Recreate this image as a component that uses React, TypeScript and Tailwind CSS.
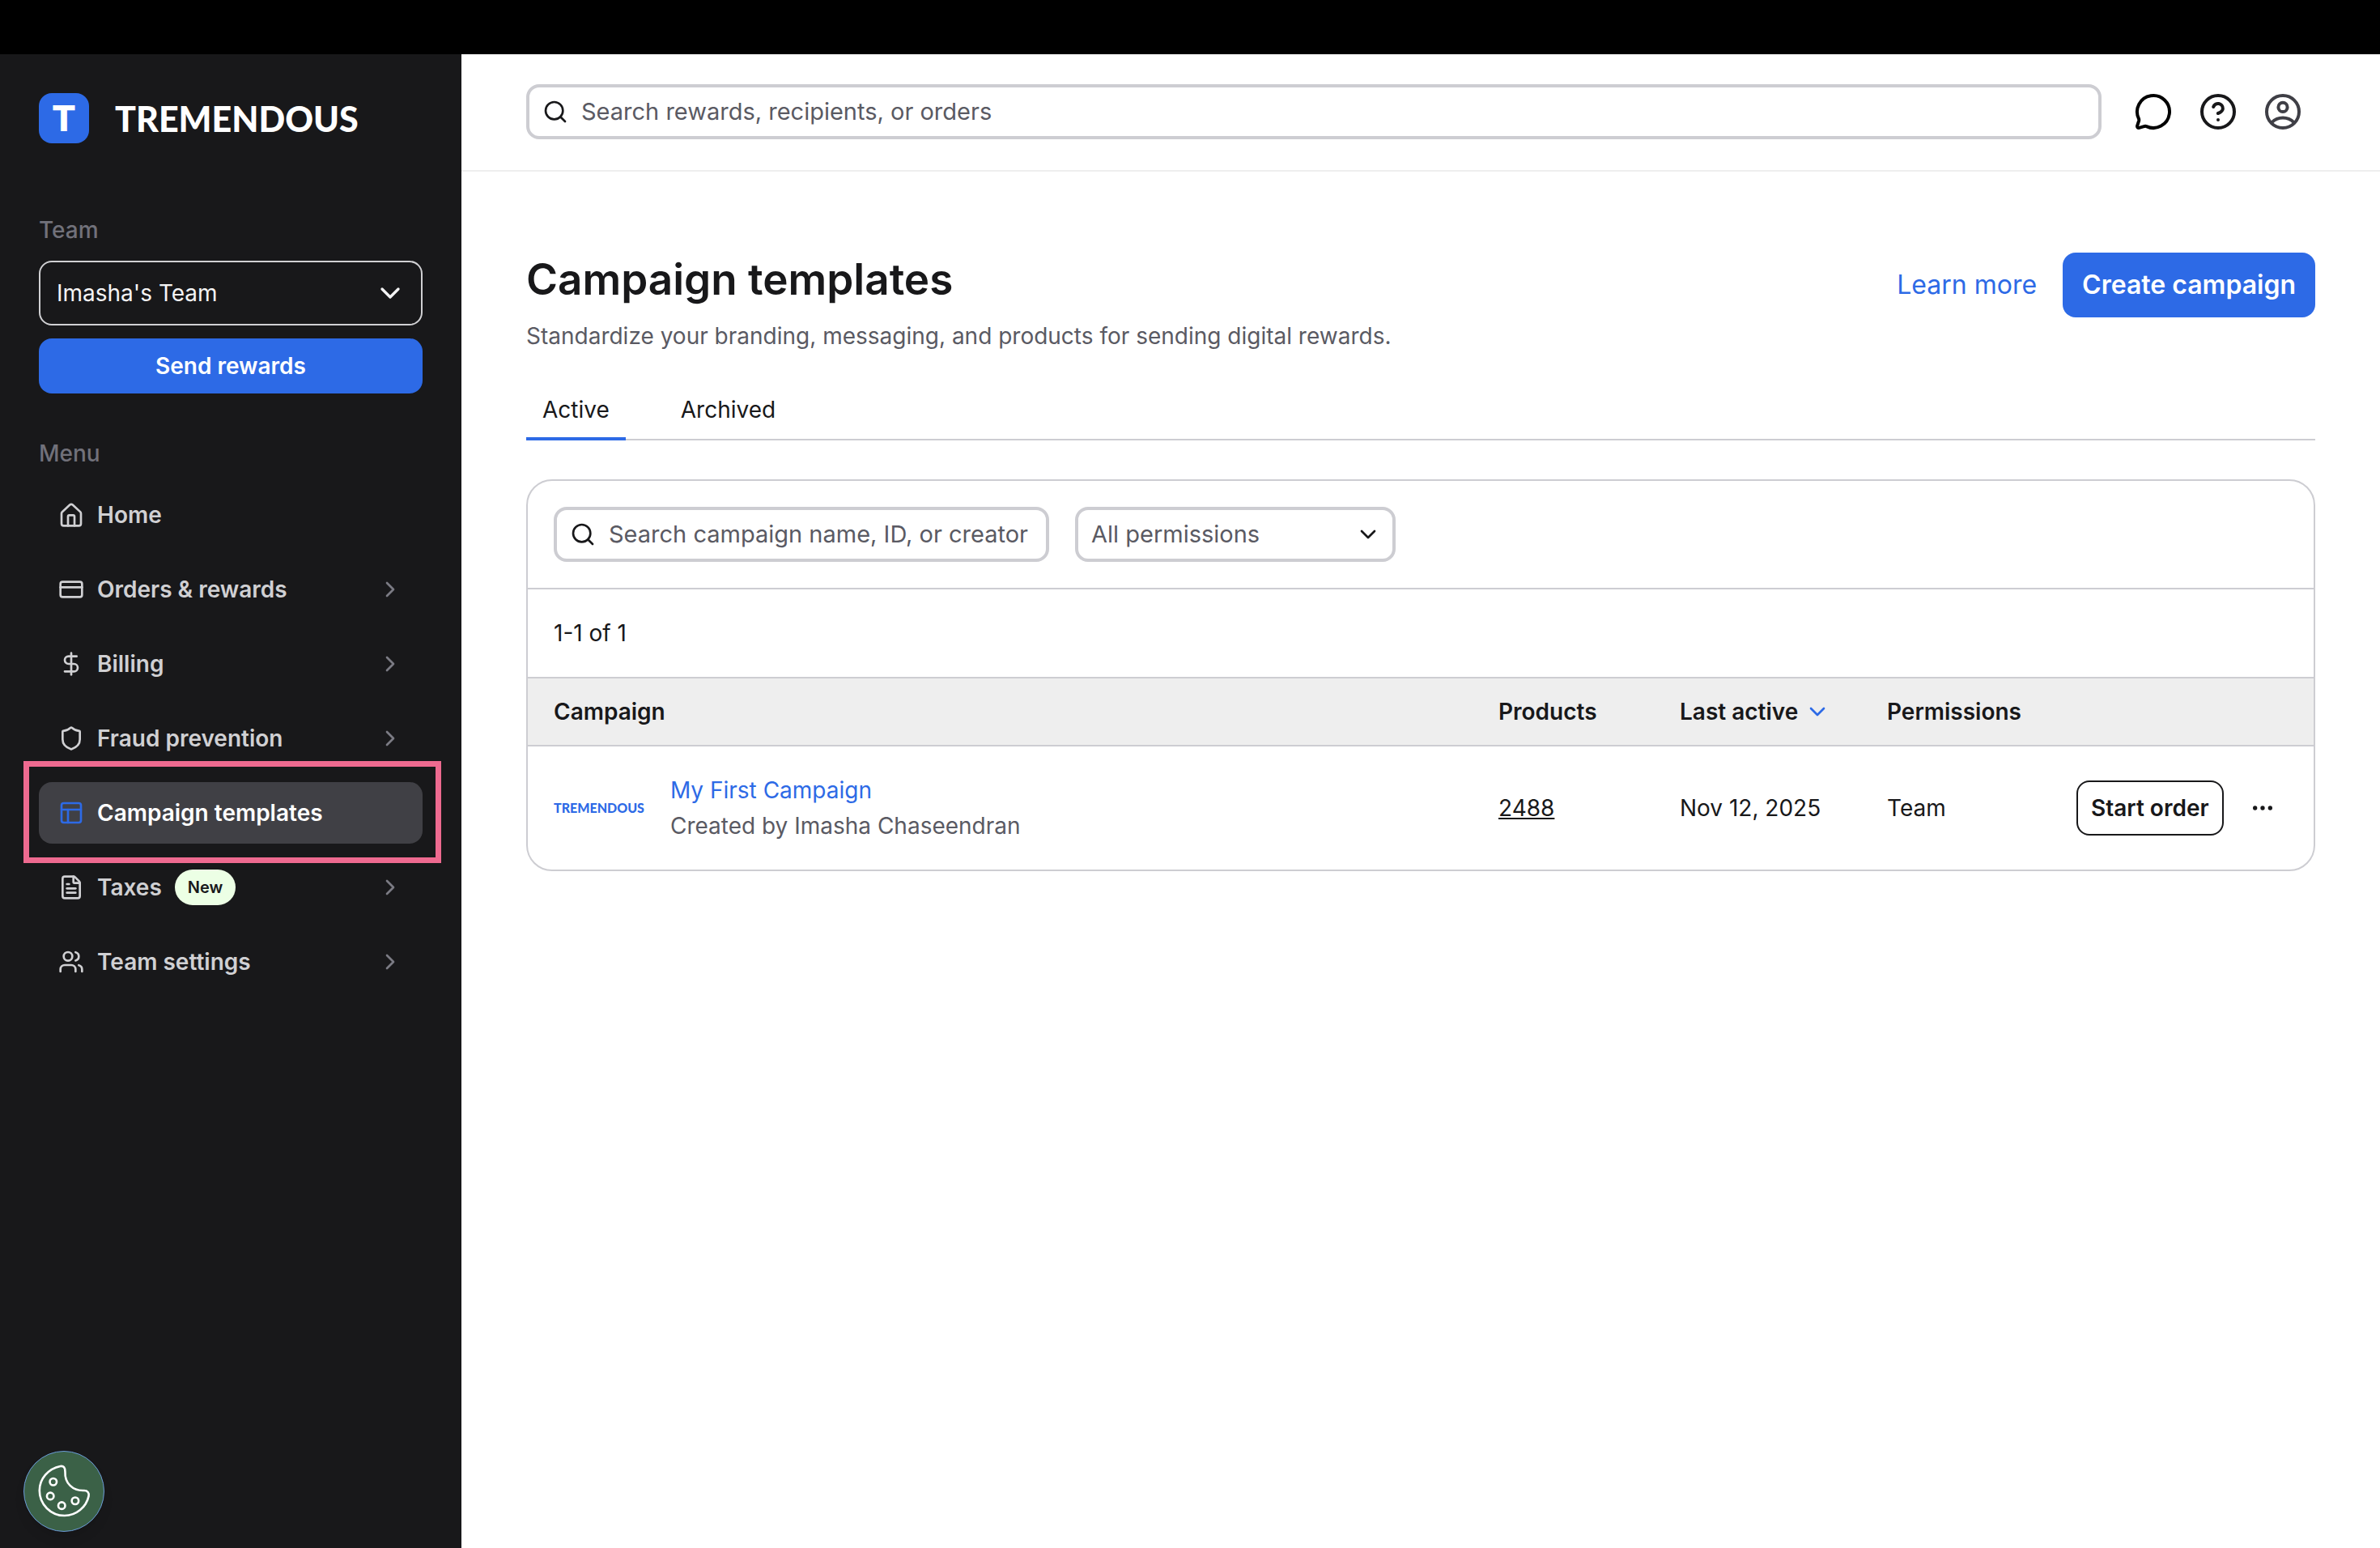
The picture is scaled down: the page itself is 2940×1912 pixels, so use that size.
import type { ReactNode } from 'react';
import {
  ChevronDown,
  ChevronRight,
  CircleHelp,
  CreditCard,
  DollarSign,
  Ellipsis,
  FileText,
  MessageCircle,
  PanelsTopLeft,
  Search,
  Shield,
  Users,
} from 'lucide-react';

function HomeIcon() {
  return (
    <svg
      className="size-8"
      viewBox="0 0 24 24"
      fill="none"
      stroke="currentColor"
      strokeWidth="2"
      strokeLinecap="round"
      strokeLinejoin="round"
      aria-hidden="true"
    >
      <path d="M3 10.6c0-.6.25-1.1.7-1.5l7-6.4a2 2 0 0 1 2.6 0l7 6.4c.45.4.7.9.7 1.5V20a2 2 0 0 1-2 2H5a2 2 0 0 1-2-2Z" />
      <path d="M9 22v-8.5a1.2 1.2 0 0 1 1.2-1.2h3.6a1.2 1.2 0 0 1 1.2 1.2V22" />
    </svg>
  );
}

function ProfileIcon() {
  return (
    <svg
      className="size-12"
      viewBox="0 0 24 24"
      fill="none"
      stroke="currentColor"
      strokeWidth="2"
      strokeLinecap="round"
      aria-hidden="true"
    >
      <circle cx="12" cy="12" r="10" />
      <circle cx="12" cy="9.2" r="2.8" />
      <path d="M5.2 18.6a9.6 9.6 0 0 1 13.6 0" />
    </svg>
  );
}

function CookieIcon() {
  return (
    <svg className="size-full" viewBox="88 96 299 300" fill="none" stroke="#fff" strokeWidth="8" aria-hidden="true">
      <path
        d="M224 151C178 160 145 199 145 243A95 95 0 0 0 240 338C284 338 322 306 331 264C334 252 326 243 314 243C270 245 240 215 242 172C242 156 236 149 224 151Z"
        strokeLinejoin="round"
      />
      <circle cx="197" cy="210" r="13" />
      <circle cx="186" cy="264" r="13" />
      <circle cx="229" cy="300" r="13" />
      <circle cx="280" cy="282" r="13" />
    </svg>
  );
}

type NavItem = {
  label: string;
  icon: ReactNode;
  expandable?: boolean;
  active?: boolean;
  badge?: string;
};

const NAV: NavItem[] = [
  { label: 'Home', icon: <HomeIcon /> },
  { label: 'Orders & rewards', icon: <CreditCard size={32} strokeWidth={2} />, expandable: true },
  { label: 'Billing', icon: <DollarSign size={32} strokeWidth={2} />, expandable: true },
  { label: 'Fraud prevention', icon: <Shield size={32} strokeWidth={2} />, expandable: true },
  { label: 'Campaign templates', icon: <PanelsTopLeft size={32} strokeWidth={2} />, active: true },
  { label: 'Taxes', icon: <FileText size={32} strokeWidth={2} />, expandable: true, badge: 'New' },
  { label: 'Team settings', icon: <Users size={32} strokeWidth={2} />, expandable: true },
];

function NavLink({ item }: { item: NavItem }) {
  return (
    <li className="relative">
      <a
        href="#"
        aria-current={item.active ? 'page' : undefined}
        className={
          item.active
            ? 'flex h-[76px] items-center gap-4 rounded-2xl bg-[#404045] px-6 text-white'
            : 'flex h-[76px] items-center gap-4 rounded-2xl px-6 text-[#d0d0d3]'
        }
      >
        <span className={item.active ? 'text-[#2d6ae6]' : ''}>{item.icon}</span>
        <span className="font-semibold">{item.label}</span>
        {item.badge && (
          <span className="flex h-11 items-center rounded-full bg-[#ecffe5] px-4 text-[20px] font-semibold text-[#18181b]">
            {item.badge}
          </span>
        )}
        {item.expandable && <ChevronRight size={32} strokeWidth={2} className="ml-auto text-[#7b7b84]" />}
      </a>
      {item.active && (
        <div className="pointer-events-none absolute -top-[26px] -right-[23px] -bottom-[24px] -left-[19px] border-[7px] border-[#ee6a90]" />
      )}
    </li>
  );
}

function Sidebar() {
  return (
    <aside className="flex w-[570px] shrink-0 flex-col bg-[#18181a] px-12 pt-12">
      <a href="#" className="flex items-center gap-8 text-white">
        <span className="flex size-[62px] items-center justify-center rounded-2xl bg-[#2d6ae6] text-[44px] leading-none font-extrabold">
          T
        </span>
        <span className="font-['Lato',sans-serif] text-[43px] leading-none font-black">TREMENDOUS</span>
      </a>

      <label htmlFor="team" className="mt-[85px] mb-4 leading-[44px] font-medium text-[#71717a]">
        Team
      </label>
      <div className="relative">
        <select
          id="team"
          className="h-20 w-full appearance-none rounded-2xl border-2 border-[#d0d0d3] bg-transparent px-5 text-[#f4f4f5]"
        >
          <option>Imasha's Team</option>
        </select>
        <ChevronDown
          size={40}
          strokeWidth={2}
          className="pointer-events-none absolute top-5 right-5 text-[#f4f4f5]"
        />
      </div>
      <button type="button" className="mt-4 h-[68px] rounded-2xl bg-[#2d6ae6] font-semibold text-white">
        Send rewards
      </button>

      <h2 className="mt-[52px] mb-4 leading-[44px] font-medium text-[#71717a]">Menu</h2>
      <nav aria-label="Menu">
        <ul className="flex flex-col gap-4">
          {NAV.map((item) => (
            <NavLink key={item.label} item={item} />
          ))}
        </ul>
      </nav>
    </aside>
  );
}

function SearchField({ label, className }: { label: string; className: string }) {
  return (
    <label className={className}>
      <Search size={32} strokeWidth={2} className="shrink-0 text-[#18181a]" />
      <input
        type="text"
        aria-label={label}
        placeholder={label}
        className="min-w-0 flex-1 bg-transparent text-[29px] outline-none placeholder:text-[#5a5a63]"
      />
    </label>
  );
}

function TopBar() {
  return (
    <header className="flex items-center gap-10 border-b-2 border-[#eeeeee] pt-[37px] pr-24 pb-[38px] pl-20">
      <SearchField
        label="Search rewards, recipients, or orders"
        className="flex h-[68px] min-w-0 flex-1 items-center gap-4 rounded-2xl border-4 border-[#cdcdd2] px-4"
      />
      <div className="flex items-center gap-8">
        <button type="button" aria-label="Messages" className="text-black">
          <MessageCircle size={48} strokeWidth={2} />
        </button>
        <button type="button" aria-label="Help" className="text-[#18181a]">
          <CircleHelp size={48} strokeWidth={2} />
        </button>
        <button type="button" aria-label="Account" className="text-[#3f3f46]">
          <ProfileIcon />
        </button>
      </div>
    </header>
  );
}

function CampaignTable() {
  return (
    <table className="w-full table-fixed border-collapse text-left">
      <colgroup>
        <col />
        <col className="w-[224px]" />
        <col className="w-[256px]" />
        <col className="w-[234px]" />
        <col className="w-[325px]" />
      </colgroup>
      <thead>
        <tr className="h-[83px] border-b-2 border-[#cdcdd2] bg-[#eeeeee] [&>th]:pl-8 [&>th]:font-semibold">
          <th scope="col">Campaign</th>
          <th scope="col">Products</th>
          <th scope="col" aria-sort="descending">
            <button type="button" className="flex items-center gap-2">
              Last active
              <ChevronDown size={32} strokeWidth={2} className="text-[#2d6ae6]" />
            </button>
          </th>
          <th scope="col">Permissions</th>
          <th scope="col" aria-label="Actions" />
        </tr>
      </thead>
      <tbody>
        <tr className="h-[153px] [&>td]:pl-8">
          <td>
            <div className="flex items-center gap-8">
              <span className="font-['Lato',sans-serif] text-[16px] leading-none font-black text-[#2d6ae6]">
                TREMENDOUS
              </span>
              <div className="leading-[44px]">
                <a href="#" className="block text-[#2d6ae6]">
                  My First Campaign
                </a>
                <p className="text-[#5a5a63]">Created by Imasha Chaseendran</p>
              </div>
            </div>
          </td>
          <td>
            <a href="#" className="underline decoration-2 underline-offset-2">
              2488
            </a>
          </td>
          <td>Nov 12, 2025</td>
          <td>Team</td>
          <td>
            <div className="flex items-center gap-8">
              <button
                type="button"
                className="h-[68px] rounded-2xl border-2 border-[#18181a] px-4 font-semibold whitespace-nowrap"
              >
                Start order
              </button>
              <button type="button" aria-label="More actions">
                <Ellipsis size={32} strokeWidth={2} />
              </button>
            </div>
          </td>
        </tr>
      </tbody>
    </table>
  );
}

function CampaignsPage() {
  return (
    <main className="px-20 pt-[100px] pb-20">
      <div className="flex items-start justify-between gap-8">
        <div>
          <h1 className="text-[53px] leading-[66px] font-semibold">Campaign templates</h1>
          <p className="mt-4 leading-[42px] text-[#5a5a63]">
            Standardize your branding, messaging, and products for sending digital rewards.
          </p>
        </div>
        <div className="flex items-center gap-8 text-[32px] whitespace-nowrap">
          <a href="#" className="text-[#2d6ae6]">
            Learn more
          </a>
          <button type="button" className="h-20 rounded-2xl bg-[#2d6ae6] px-6 font-semibold text-white">
            Create campaign
          </button>
        </div>
      </div>

      <div role="tablist" className="mt-9 flex gap-12 border-b-2 border-[#cdcdd2]">
        <button
          type="button"
          role="tab"
          aria-selected="true"
          className="-mb-[2px] h-[72px] border-b-4 border-[#2d6ae6] px-5"
        >
          Active
        </button>
        <button
          type="button"
          role="tab"
          aria-selected="false"
          className="-mb-[2px] h-[72px] border-b-4 border-transparent px-5"
        >
          Archived
        </button>
      </div>

      <section className="mt-12 overflow-hidden rounded-[32px] border-2 border-[#cdcdd2]">
        <div className="flex gap-8 border-b-2 border-[#cdcdd2] p-8">
          <SearchField
            label="Search campaign name, ID, or creator"
            className="flex h-[68px] w-[612px] items-center gap-4 rounded-2xl border-4 border-[#cdcdd2] pr-2 pl-4"
          />
          <div className="relative w-[396px]">
            <select
              aria-label="Permissions"
              className="h-[68px] w-full appearance-none rounded-2xl border-4 border-[#cdcdd2] bg-transparent px-4 text-[29px] text-[#5a5a63]"
            >
              <option>All permissions</option>
            </select>
            <ChevronDown size={32} strokeWidth={2} className="pointer-events-none absolute top-[18px] right-[18px]" />
          </div>
        </div>
        <p className="flex h-[110px] items-center border-b-2 border-[#cdcdd2] px-8">1-1 of 1</p>
        <CampaignTable />
      </section>
    </main>
  );
}

export default function App() {
  return (
    <div className="flex min-h-screen flex-col bg-white font-['Inter',sans-serif] text-[28px] leading-[42px] text-[#18181a]">
      <div className="h-[67px] bg-black" />
      <div className="flex flex-1">
        <Sidebar />
        <div className="min-w-0 flex-1">
          <TopBar />
          <CampaignsPage />
        </div>
      </div>
      <button
        type="button"
        aria-label="Cookie preferences"
        className="fixed bottom-5 left-[29px] size-[100px] rounded-full border border-[#6b9bd8] bg-[#3b6147] shadow-lg"
      >
        <CookieIcon />
      </button>
    </div>
  );
}
